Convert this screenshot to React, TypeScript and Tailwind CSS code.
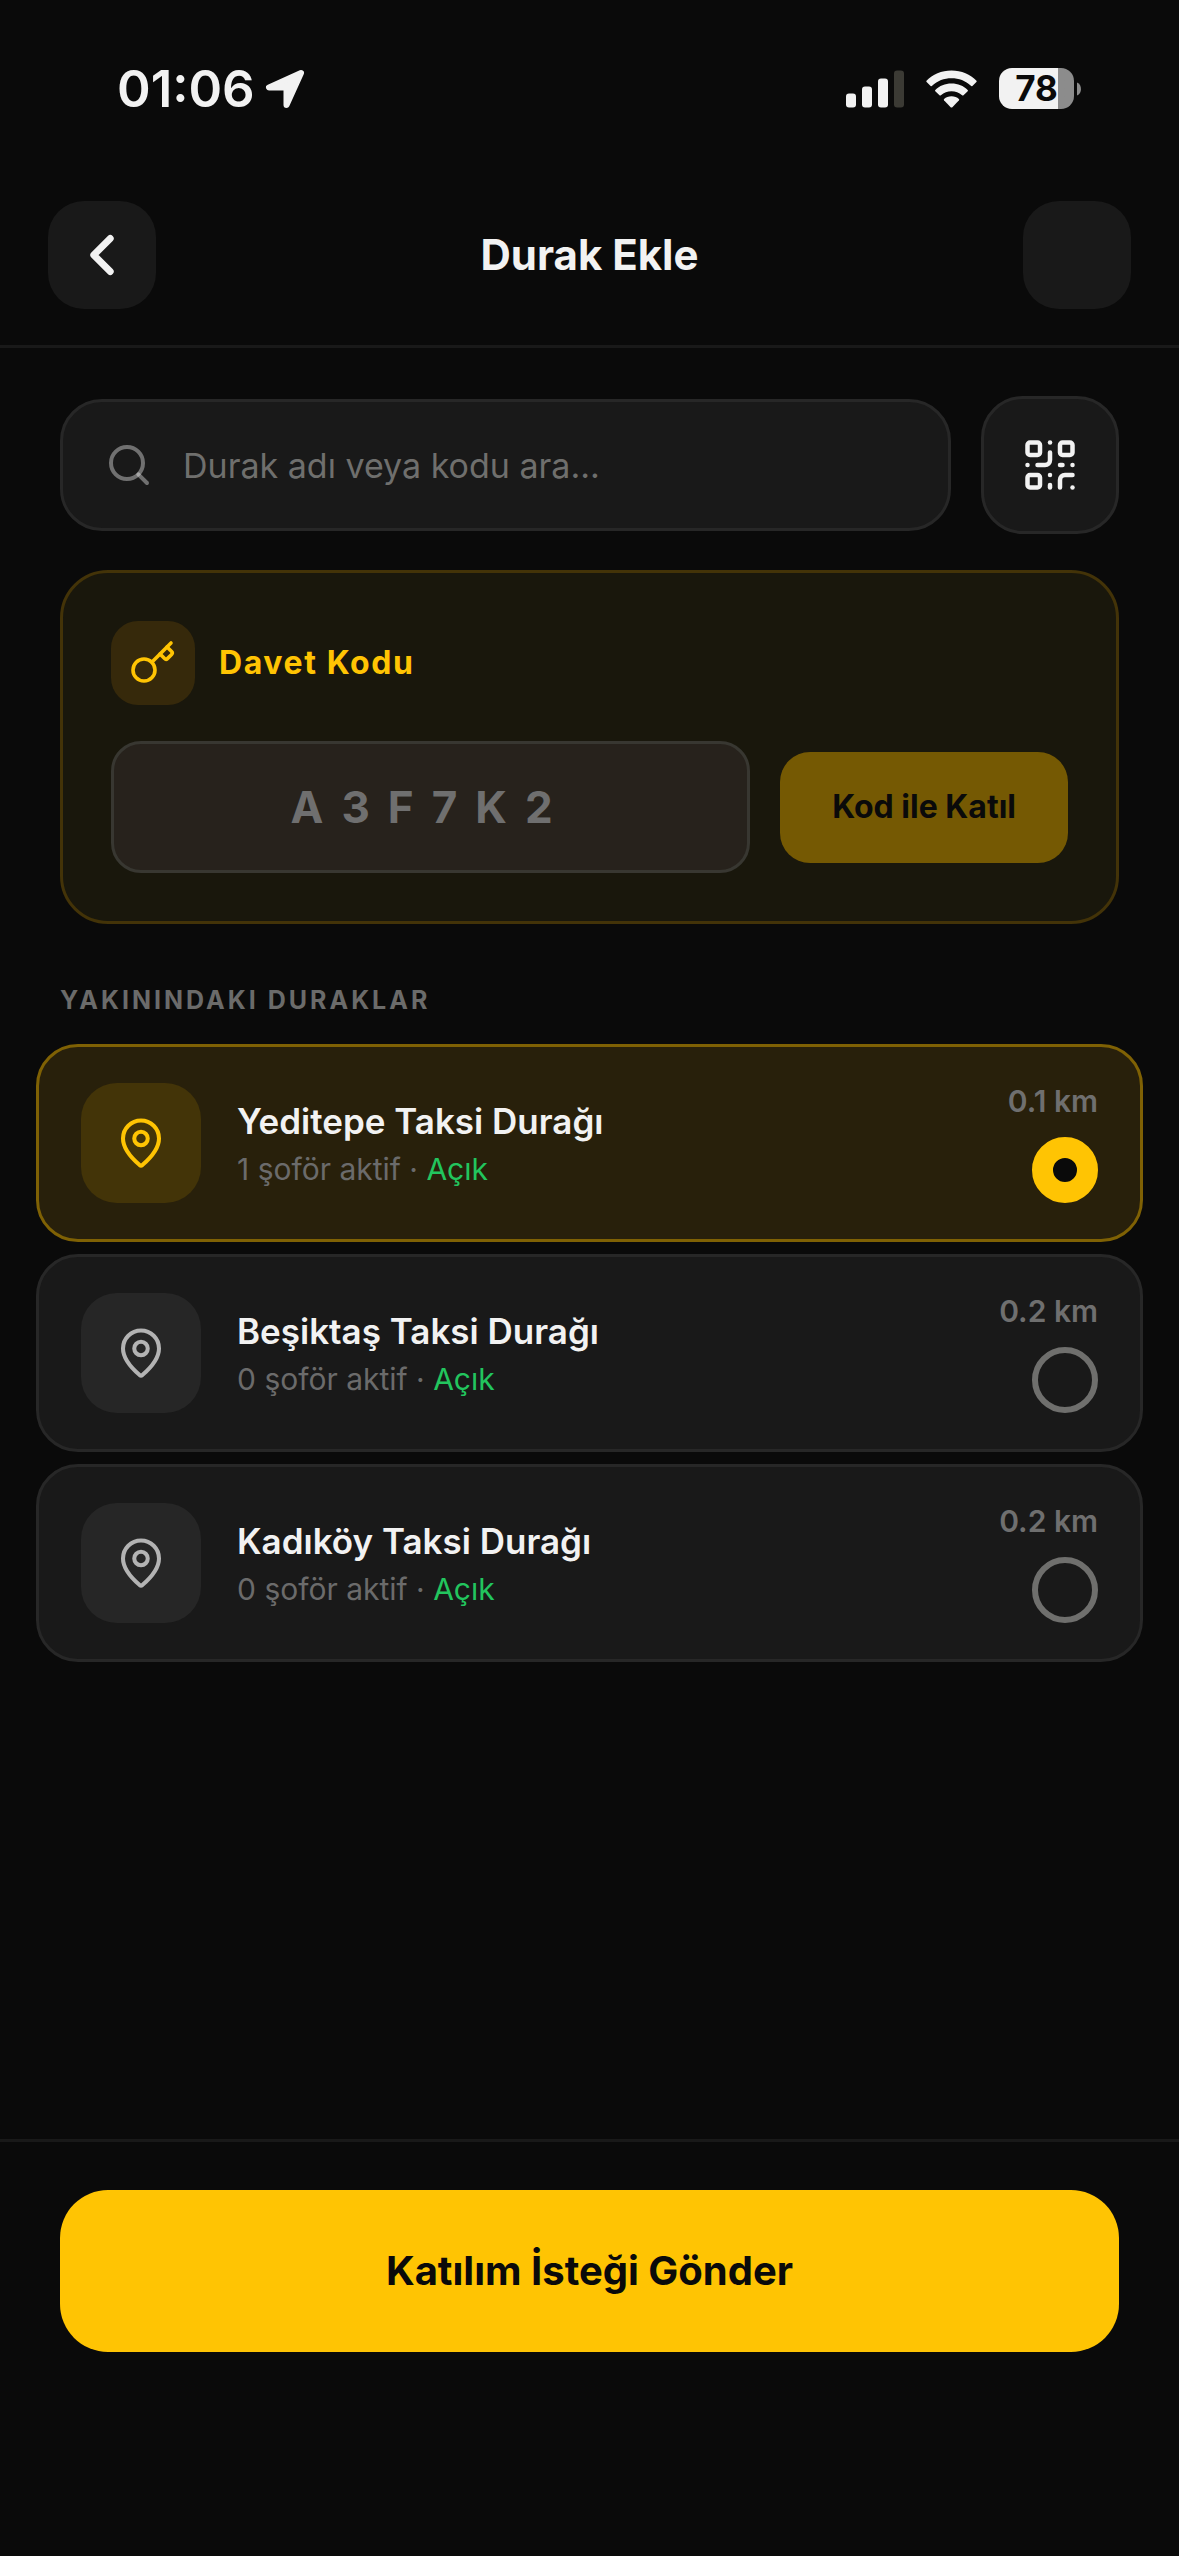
import { useState } from "react";
import { ChevronLeft, Key, MapPin, QrCode, Search } from "lucide-react";

const stops = [
  { id: "yeditepe", name: "Yeditepe Taksi Durağı", drivers: 1, open: true, distance: "0.1 km" },
  { id: "besiktas", name: "Beşiktaş Taksi Durağı", drivers: 0, open: true, distance: "0.2 km" },
  { id: "kadikoy", name: "Kadıköy Taksi Durağı", drivers: 0, open: true, distance: "0.2 km" },
];

function StatusBar() {
  return (
    <div className="flex h-[177px] items-center justify-between pr-[98px] pl-[117px] text-[#f2f2f2]">
      <div className="flex items-center gap-2.5">
        <span className="text-[51px] leading-none font-semibold">01:06</span>
        <svg viewBox="0 0 40 40" className="size-10" fill="currentColor" stroke="currentColor" strokeWidth="6" strokeLinejoin="round">
          <path d="M36 4 L4 18.500 L21.500 18.500 L21.500 36 Z" />
        </svg>
      </div>
      <div className="flex items-center gap-[22px]">
        <svg viewBox="0 0 58 38" className="h-[38px] w-[58px]" fill="currentColor">
          <rect x="0" y="23.500" width="10" height="14" rx="3" />
          <rect x="16" y="16.500" width="10" height="21" rx="3" />
          <rect x="32" y="8.500" width="10" height="29" rx="3" />
          <rect x="48" y="0.500" width="10" height="37" rx="3" fill="#3b3a34" />
        </svg>
        <svg viewBox="0 0 51 38" className="h-[38px] w-[51px]" fill="currentColor">
          <path d="M25.500 0.500C35.500 0.500 44.500 4.500 50.500 10.700Q51 11.400 50.400 12.100L46.400 15.900Q45.600 16.500 44.900 15.800C39.500 10.600 33 8.200 25.500 8.200S11.500 10.600 6.100 15.800Q5.400 16.500 4.600 15.900L0.600 12.100Q0 11.400 0.500 10.700C6.500 4.500 15.500 0.500 25.500 0.500Z" />
          <path d="M25.500 13.500C32 13.500 37.500 15.800 41.700 19.900Q42.300 20.600 41.700 21.300L37.500 25.200Q36.800 25.800 36.100 25.200C33 22.600 29.500 21.200 25.500 21.200S18 22.600 14.900 25.200Q14.200 25.800 13.500 25.200L9.300 21.300Q8.700 20.600 9.300 19.900C13.500 15.800 19 13.500 25.500 13.500Z" />
          <path d="M25.500 26.300C28.500 26.300 31 27.300 32.900 28.900Q33.600 29.600 33 30.300L26.400 37.200Q25.500 38 24.600 37.200L18 30.300Q17.400 29.600 18.100 28.900C20 27.300 22.500 26.300 25.500 26.300Z" />
        </svg>
        <div className="flex items-center gap-[3px]">
          <div className="flex h-[41px] w-[75px] items-center justify-center rounded-[13px] bg-linear-to-r from-[#f2f2f2] from-79% to-[#8c8c8c] to-79%">
            <span className="text-[35px] leading-none font-bold text-[#0a0a0a]">78</span>
          </div>
          <svg viewBox="0 0 4 14" className="h-3.5 w-1" fill="#8c8c8c">
            <path d="M0 0.500C5.300 2.500 5.300 11.500 0 13.500Z" />
          </svg>
        </div>
      </div>
    </div>
  );
}

export default function App() {
  const [selected, setSelected] = useState("yeditepe");
  const [query, setQuery] = useState("");
  const [code, setCode] = useState("");

  return (
    <div className="flex min-h-screen flex-col bg-[#0a0a0a] font-['Inter',sans-serif] text-[#f2f2f2]">
      <StatusBar />

      <header className="flex items-center justify-between border-b-3 border-[#191919] px-12 pt-6 pb-9">
        <button aria-label="Geri" className="flex size-[108px] items-center justify-center rounded-[36px] bg-[#191919]">
          <ChevronLeft size={66} strokeWidth={2.5} />
        </button>
        <h1 className="text-[42px] leading-12 font-bold">Durak Ekle</h1>
        <div className="size-[108px] rounded-[36px] bg-[#191919]" />
      </header>

      <main className="flex flex-col pt-12">
        <div className="flex items-center gap-[30px] px-15">
          <label className="flex h-[132px] min-w-0 flex-1 items-center gap-[30px] rounded-[42px] border-3 border-[#272727] bg-[#191919] px-[42px]">
            <Search size={48} strokeWidth={2} className="shrink-0 text-white/38" />
            <input
              type="text"
              aria-label="Durak ara"
              value={query}
              onChange={(e) => setQuery(e.target.value)}
              placeholder="Durak adı veya kodu ara..."
              className="min-w-0 flex-1 bg-transparent text-[34px] outline-none placeholder:text-[#6f6f6d]"
            />
          </label>
          <button aria-label="QR kod tara" className="flex size-[138px] shrink-0 items-center justify-center rounded-[42px] border-3 border-[#272727] bg-[#191919]">
            <QrCode size={60} strokeWidth={1.8} />
          </button>
        </div>

        <section className="mx-15 mt-9 flex flex-col gap-9 rounded-[48px] border-3 border-[#433308] bg-[#19170c] p-12">
          <div className="flex items-center gap-6">
            <div className="flex size-[84px] items-center justify-center rounded-[27px] bg-[#36290b] text-[#ffc403]">
              <Key size={48} strokeWidth={1.8} />
            </div>
            <h2 className="text-[32px] leading-10 font-bold tracking-wider text-[#ffc403]">Davet Kodu</h2>
          </div>
          <div className="flex items-center gap-[30px]">
            <input
              type="text"
              aria-label="Davet kodu"
              value={code}
              onChange={(e) => setCode(e.target.value)}
              placeholder="A3F7K2"
              className="h-[132px] min-w-0 flex-1 rounded-[30px] border-3 border-[#383731] bg-[#27221c] text-center text-[44px] font-bold tracking-[18px] outline-none placeholder:text-[#6f6f6f]"
            />
            <button className="h-[111px] shrink-0 rounded-[30px] bg-[#755903] px-13 text-[32px] font-bold text-[#0a0a0a]">
              Kod ile Katıl
            </button>
          </div>
        </section>

        <h2 className="mt-15 mb-7 px-15 text-[25px] leading-8 font-bold tracking-[3px] text-[#6b6b6a]">YAKININDAKI DURAKLAR</h2>

        <div className="flex flex-col gap-3 px-9">
          {stops.map((s) => {
            const active = s.id === selected;
            return (
              <label
                key={s.id}
                className={`flex items-center gap-9 rounded-[42px] border-3 px-[42px] py-9 ${active ? "border-[#7f6104] bg-[#28200b]" : "border-[#272727] bg-[#191919]"}`}
              >
                <div className={`flex size-[120px] shrink-0 items-center justify-center rounded-[36px] ${active ? "bg-[#433408] text-[#ffc403]" : "bg-[#262626] text-[#b3b3b3]"}`}>
                  <MapPin size={54} strokeWidth={1.8} />
                </div>
                <div className="flex min-w-0 flex-1 flex-col gap-1">
                  <span className="text-[35px] leading-12 font-semibold">{s.name}</span>
                  <span className="text-[30px] leading-10 text-[#6b6b6b]">
                    {s.drivers} şoför aktif · <span className="text-[#22c55e]">{s.open ? "Açık" : "Kapalı"}</span>
                  </span>
                </div>
                <div className="flex flex-col items-end gap-[18px]">
                  <span className="text-[30px] leading-9 font-semibold text-[#6f6f6f]">{s.distance}</span>
                  <input
                    type="radio"
                    name="stop"
                    checked={active}
                    onChange={() => setSelected(s.id)}
                    className="size-[66px] appearance-none rounded-full border-6 border-[#6f6f6d] checked:border-21 checked:border-[#ffc403] checked:bg-[#0a0a0a]"
                  />
                </div>
              </label>
            );
          })}
        </div>
      </main>

      <footer className="mt-auto border-t-3 border-[#191919] px-15 pt-12 pb-51">
        <button className="h-[162px] w-full rounded-[48px] bg-[#ffc403] text-[40px] font-bold text-[#0a0a0a]">
          Katılım İsteği Gönder
        </button>
      </footer>
    </div>
  );
}
